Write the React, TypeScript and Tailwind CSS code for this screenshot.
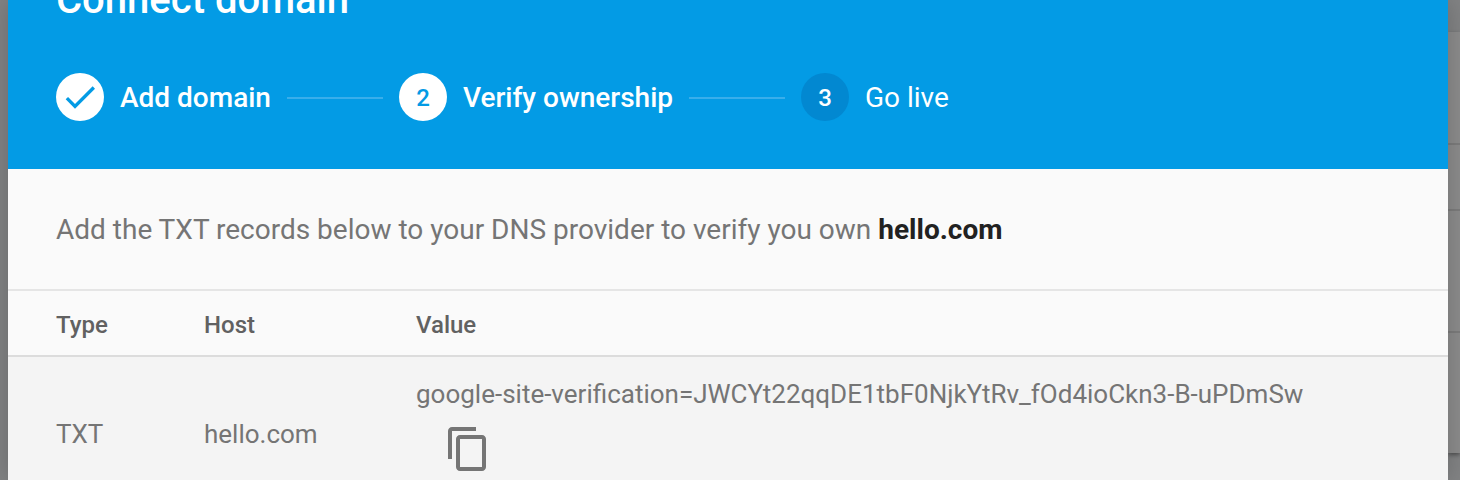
import React from "react";
import { MdCheck, MdContentCopy } from "react-icons/md";

type Step = { label: string; state: "done" | "current" | "upcoming" };
type DnsRecord = { type: string; host: string; value: string };

const steps: Step[] = [
  { label: "Add domain", state: "done" },
  { label: "Verify ownership", state: "current" },
  { label: "Go live", state: "upcoming" },
];

const records: DnsRecord[] = [
  { type: "TXT", host: "hello.com", value: "google-site-verification=JWCYt22qqDE1tbF0NjkYtRv_fOd4ioCkn3-B-uPDmSw" },
];

function StepItem({ step, index }: { step: Step; index: number }) {
  const upcoming = step.state === "upcoming";
  return (
    <li className="flex items-center gap-4" aria-current={step.state === "current" ? "step" : undefined}>
      {index > 0 && <span className="mt-0.5 h-0.5 w-24 bg-[#39aeeb]" />}
      <span
        className={`flex size-12 shrink-0 items-center justify-center rounded-full text-2xl font-medium ${step.state === "done" ? "" : "pt-0.5"} ${upcoming ? "bg-[#0288d1] text-white" : "bg-white text-[#039be5]"}`}
      >
        {step.state === "done" ? <MdCheck className="size-10" /> : index + 1}
      </span>
      <span className={`pt-0.5 text-[28px] leading-8 whitespace-nowrap ${upcoming ? "font-normal" : "font-medium"}`}>{step.label}</span>
    </li>
  );
}

// Slice of the dimmed console page that shows beside the dialog
function Backdrop() {
  return (
    <div className="flex w-3 shrink-0 flex-col" aria-hidden="true">
      <div className="h-8" />
      <div className="bg-[#8c8c8c] shadow-[0_2px_4px_rgba(0,0,0,0.4)]">
        <div className="h-[113px] border-b-2 border-[#7c7c7c]" />
        <div className="h-[66px] border-b-2 border-[#7c7c7c]" />
        <div className="h-[122px] border-b-2 border-[#7c7c7c]" />
        <div className="h-[120px]" />
      </div>
    </div>
  );
}

export default function App() {
  const copy = (value: string) => navigator.clipboard?.writeText(value);

  return (
    <div className="flex h-screen overflow-hidden bg-[#828384] pl-2 font-[Roboto,sans-serif]">
      <main className="relative z-10 min-w-0 flex-1 bg-[#fafafa] shadow-[0_0_24px_rgba(0,0,0,0.2)]">
        <header className="-mt-6 bg-[#039be5] px-12 pb-12 text-white">
          <h1 className="text-[40px] leading-12 font-medium">Connect domain</h1>
          <ol className="flex items-center gap-4 pt-[49px]">
            {steps.map((s, i) => <StepItem key={s.label} step={s} index={i} />)}
          </ol>
        </header>

        <p className="px-12 pt-[45px] pb-[43px] text-[28px] leading-8 text-[#757575]">
          Add the TXT records below to your DNS provider to verify you own <strong className="font-bold text-[#212121]">hello.com</strong>
        </p>

        <table className="w-full table-fixed border-separate border-spacing-0 text-left">
          <thead>
            <tr className="text-2xl text-[#616161]">
              <th className="w-[196px] border-t-2 border-b-2 border-t-[#e5e5e5] border-b-[#dcdcdc] pt-[18px] pb-[14px] pl-12 font-medium">Type</th>
              <th className="w-[212px] border-t-2 border-b-2 border-t-[#e5e5e5] border-b-[#dcdcdc] pt-[18px] pb-[14px] font-medium">Host</th>
              <th className="border-t-2 border-b-2 border-t-[#e5e5e5] border-b-[#dcdcdc] pt-[18px] pr-12 pb-[14px] font-medium">Value</th>
            </tr>
          </thead>
          <tbody>
            {records.map((r) => (
              <tr key={r.value} className="bg-[#f4f4f4] text-[26px] leading-[30px] text-[#757575]">
                <td className="py-[22px] pl-12">{r.type}</td>
                <td className="py-[22px]">{r.host}</td>
                <td className="py-[22px] pr-12">
                  <div>{r.value}</div>
                  <button type="button" aria-label="Copy value" className="ml-3 block p-4" onClick={() => copy(r.value)}>
                    <MdContentCopy className="size-12" />
                  </button>
                </td>
              </tr>
            ))}
          </tbody>
        </table>
      </main>
      <Backdrop />
    </div>
  );
}
